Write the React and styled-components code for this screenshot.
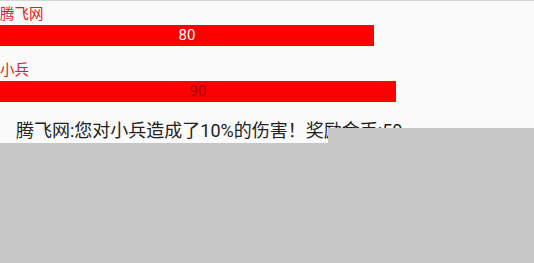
import React from "react";
import styled, { createGlobalStyle } from "styled-components";

const Global = createGlobalStyle`
  html, body { margin: 0; padding: 0; background: #fafafa; }
  body { font-family: Roboto, "Noto Sans CJK SC", sans-serif; overflow: hidden; }
`;

const Screen = styled.div`
  width: 534px;
  height: 263px;
  position: relative;
  display: flex;
  flex-direction: column;
  border-top: 1px solid #d6d6d6;
  box-sizing: border-box;
  background: #fafafa;
  overflow: hidden;
`;

const Unit = styled.div`
  display: flex;
  flex-direction: column;
  margin-top: ${(p) => p.$top}px;
`;

const Label = styled.div`
  color: #e0201c;
  font-size: 14.5px;
  line-height: 20px;
  height: 20px;
`;

const Bar = styled.div`
  width: ${(p) => p.$w}px;
  height: 21px;
  background: #ff0000;
  color: ${(p) => p.$color};
  font-size: 15px;
  line-height: 21px;
  text-align: center;
`;

const Message = styled.div`
  margin-top: 18px;
  padding-left: 16px;
  font-size: 18px;
  line-height: 22px;
  color: #222;
  white-space: nowrap;
`;

const Panel = styled.div`
  flex: 1;
  margin-top: 1px;
  background: #c7c7c7;
`;

const Overlay = styled.div`
  position: absolute;
  left: 328px;
  top: 127px;
  right: 0;
  bottom: 0;
  background: #c7c7c7;
`;

export default function App() {
  return (
    <>
      <Global />
      <Screen>
        <Unit $top={4}>
          <Label>腾飞网</Label>
          <Bar $w={374} $color="#ffffff">80</Bar>
        </Unit>
        <Unit $top={15}>
          <Label>小兵</Label>
          <Bar $w={396} $color="#a00000">90</Bar>
        </Unit>
        <Message>腾飞网:您对小兵造成了10%的伤害！奖励金币:50</Message>
        <Panel />
        <Overlay />
      </Screen>
    </>
  );
}
